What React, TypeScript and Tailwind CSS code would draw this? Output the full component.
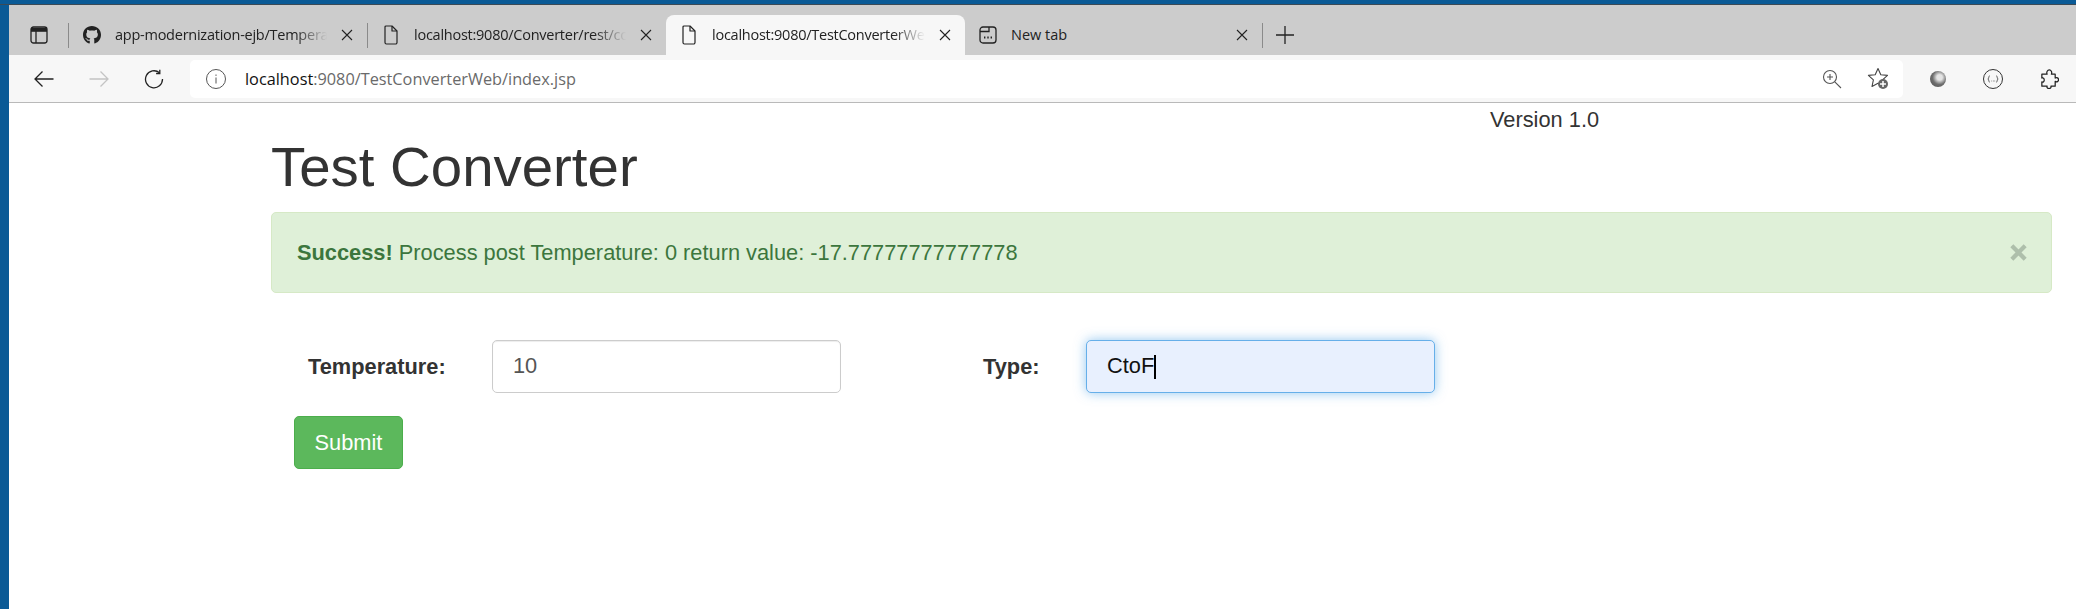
import React from "react";
import { FaGithub } from "react-icons/fa";

const Close = ({ className = "" }: { className?: string }) => (
  <svg viewBox="0 0 12 12" className={"w-3 h-3 shrink-0 " + className} fill="none" stroke="#222" strokeWidth="1.1">
    <path d="M1 1l10 10M11 1L1 11" />
  </svg>
);

const FileIcon = () => (
  <svg viewBox="0 0 16 20" className="w-4 h-5 shrink-0" fill="none" stroke="#222" strokeWidth="1.2" strokeLinejoin="round">
    <path d="M3 1h6l5 5v11.5a1.5 1.5 0 0 1-1.5 1.5h-9A1.5 1.5 0 0 1 2 17.500V2a1 1 0 0 1 1-1z" />
    <path d="M9 1v5h5" />
  </svg>
);

const Sep = () => <div className="w-px h-[25px] bg-[#8a8a8a] shrink-0" />;

function Tab({ icon, title, active, width, fade = true }: { icon: React.ReactNode; title: string; active?: boolean; width: string; fade?: boolean }) {
  return (
    <div className={(active ? "bg-[#f7f7f7] rounded-t-[8px] " : "") + width + " h-10 flex items-center pl-[14px] pr-[14px] gap-[14px] shrink-0"}>
      <div className="w-[18px] flex justify-center shrink-0">{icon}</div>
      <div className={"flex-1 min-w-0 whitespace-nowrap text-[14.5px] text-[#222] " + (fade ? "tracking-[-0.25px] [mask-image:linear-gradient(to_right,black_85%,transparent)]" : "")}>{title}</div>
      <Close />
    </div>
  );
}

export default function App() {
  return (
    <div className="w-[2076px] h-[609px] bg-[#0a5a96] overflow-hidden pt-[4px] font-['Liberation_Sans',sans-serif]">
      <div className="h-px bg-[#3c4a55]" />
      <div className="ml-[9px] h-[604px] bg-white flex flex-col">
        {/* tab strip */}
        <div className="h-[50px] bg-[#cccccc] flex items-end font-['Open_Sans',sans-serif] shrink-0">
          <div className="h-10 flex items-center shrink-0">
            <svg viewBox="0 0 18 18" className="w-[18px] h-[18px] ml-[21px] mr-[20px]" fill="none" stroke="#222" strokeWidth="1.3">
              <rect x="1" y="1" width="16" height="16" rx="2.500" />
              <path d="M1 3.800h16" strokeWidth="4" />
              <path d="M6 5v12" />
            </svg>
            <Sep />
          </div>
          <Tab width="w-[298px]" title="app-modernization-ejb/Tempera" icon={<FaGithub className="w-[20px] h-[20px] text-[#222]" />} />
          <div className="h-10 flex items-center shrink-0"><Sep /></div>
          <Tab width="w-[298px]" title="localhost:9080/Converter/rest/co" icon={<FileIcon />} />
          <Tab active width="w-[299px]" title="localhost:9080/TestConverterWeb" icon={<FileIcon />} />
          <Tab
            width="w-[297px]"
            fade={false}
            title="New tab"
            icon={
              <svg viewBox="0 0 18 18" className="w-[18px] h-[18px]" fill="none" stroke="#222" strokeWidth="1.3">
                <rect x="1" y="1" width="16" height="16" rx="3" />
                <path d="M1 5.500h9V1" />
                <path d="M5 11.500h1.400M8.300 11.500h1.400M11.600 11.500h1.400" strokeWidth="1.800" />
              </svg>
            }
          />
          <div className="h-10 flex items-center shrink-0">
            <Sep />
            <svg viewBox="0 0 20 20" className="w-5 h-5 ml-[12px]" fill="none" stroke="#222" strokeWidth="1.3">
              <path d="M10 1v18M1 10h18" />
            </svg>
          </div>
        </div>
        {/* toolbar */}
        <div className="h-[48px] bg-[#f7f7f7] border-b border-[#b9b9b9] flex items-start pt-[5px] shrink-0 font-['Open_Sans',sans-serif]">
          <div className="flex items-center h-[38px] pl-[25px] gap-[35px] w-[181px] shrink-0">
            <svg viewBox="0 0 20 20" className="w-5 h-5" fill="none" stroke="#222" strokeWidth="1.3">
              <path d="M19.500 10H1M8.500 2.500L1 10l7.500 7.500" />
            </svg>
            <svg viewBox="0 0 20 20" className="w-5 h-5" fill="none" stroke="#c4c4c4" strokeWidth="1.3">
              <path d="M0.500 10H19M11.500 2.500L19 10l-7.500 7.500" />
            </svg>
            <svg viewBox="0 0 20 20" className="w-5 h-5" fill="none" stroke="#222" strokeWidth="1.3">
              <path d="M15.500 3.800a8.500 8.500 0 1 0 3 6.200" />
              <path d="M15.800 0.800v3.700h-3.700" />
            </svg>
          </div>
          <div className="w-[1713px] h-[38px] bg-white rounded-[5px] flex items-center pl-[16px] shrink-0">
            <svg viewBox="0 0 20 20" className="w-5 h-5 mr-[19px]" fill="none" stroke="#555" strokeWidth="1">
              <circle cx="10" cy="10" r="9.500" />
              <path d="M10 8.500v6M10 5.500v1.400" />
            </svg>
            <div className="text-[16.300px] text-[#6a6a6a] whitespace-nowrap"><span className="text-[#111]">localhost</span>:9080/TestConverterWeb/index.jsp</div>
            <div className="ml-auto flex items-center mr-[12px]">
              <svg viewBox="0 0 20 20" className="w-5 h-5 mr-[25px]" fill="none" stroke="#555" strokeWidth="1.1">
                <circle cx="8" cy="8" r="6.500" />
                <path d="M12.800 12.800L19 19M8 5v6M5 8h6" />
              </svg>
              <div className="relative w-[24px] h-[24px]">
                <svg viewBox="0 0 22 22" className="w-[22px] h-[22px]" fill="none" stroke="#444" strokeWidth="1.1" strokeLinejoin="round">
                  <path d="M11 1.500l2.800 6.200 6.700.7-5 4.500 1.400 6.600L11 16.200 5 19.500l1.400-6.600-5-4.500 6.800-.7z" />
                </svg>
                <div className="absolute left-[11px] top-[12px] w-[10px] h-[10px] rounded-full bg-[#666] flex items-center justify-center">
                  <svg viewBox="0 0 8 8" className="w-2 h-2" stroke="white" strokeWidth="1.500"><path d="M4 1v6M1 4h6" /></svg>
                </div>
              </div>
            </div>
          </div>
          <div className="flex items-center h-[38px] flex-1 font-['Liberation_Sans',sans-serif]">
            <div className="w-[16px] h-[16px] ml-[27px] rounded-full bg-[radial-gradient(circle_at_60%_40%,#e4e4e4_20%,#6e6e6e_52%,#4e4e4e)]" />
            <svg viewBox="0 0 20 20" className="w-5 h-5 ml-[37px]" fill="none" stroke="#333" strokeWidth="1">
              <circle cx="10" cy="10" r="9.500" />
              <path d="M6.800 7c-1 0-1 .6-1 1.300 0 1-.3 1.400-1 1.700.7.300 1 .7 1 1.700 0 .7 0 1.300 1 1.300M13.200 7c1 0 1 .6 1 1.300 0 1 .3 1.400 1 1.700-.7.300-1 .7-1 1.700 0 .7 0 1.300-1 1.300M8.500 12h.6M10 12h.6M11.500 12h.6" strokeWidth="0.800" />
            </svg>
            <svg viewBox="0 0 21 21" className="w-5 h-5 ml-[36px]" fill="none" stroke="#222" strokeWidth="1.300" strokeLinejoin="round">
              <path d="M3 5.500H8.500C7.500 3 9 1 10.800 1S14 3 13 5.500H17V9.500C18.800 8.500 20.500 9.500 20.500 11.300S18.800 14 17 13V18H12.500C13 19.500 12 20.500 10.500 20.500S8 19.500 8.500 18H3V13.500C4.500 14.300 5.500 13 5.500 11.500S4.500 8.800 3 9.500Z" />
            </svg>
          </div>
        </div>
        {/* page */}
        <div className="flex-1 relative pl-[262px] pr-[16px] text-[#333]">
          <div className="absolute left-[1481px] top-[3px] text-[21.800px] leading-[28px] text-[#333]">Version 1.0</div>
          <h1 className="text-[56.400px] leading-[62px] pt-[33px] m-0 font-normal text-[#333]">Test Converter</h1>
          <div className="mt-[14px] h-[81px] w-[1781px] bg-[#dff0d8] border border-[#d6e9c6] rounded-[5px] flex items-center justify-between pl-[25px] pr-[25px] text-[21.800px] text-[#3c763d]">
            <div className="pt-[1px]"><strong className="font-bold">Success!</strong> Process post Temperature: 0 return value: -17.77777777777778</div>
            <svg viewBox="0 0 14 14" className="w-[17px] h-[17px] -mr-[1px]" stroke="#aebfab" strokeWidth="3.500" fill="none"><path d="M1.500 1.500l11 11M12.500 1.500l-11 11" /></svg>
          </div>
          <div className="mt-[47px] h-[53px] flex items-center text-[21.800px]">
            <label className="font-bold ml-[37px] w-[184px] shrink-0 pt-[1px]">Temperature:</label>
            <div className="w-[349px] h-[53px] border border-[#cccccc] rounded-[5px] bg-white px-[20px] flex items-center text-[#555] shrink-0 shadow-[inset_0_1px_1px_rgba(0,0,0,0.075)]">10</div>
            <label className="font-bold ml-[142px] w-[103px] shrink-0 pt-[1px]">Type:</label>
            <div className="w-[349px] h-[53px] border border-[#66afe9] rounded-[5px] bg-[#e8f0fe] px-[20px] flex items-center text-[#111] shrink-0 shadow-[0_0_12px_rgba(102,175,233,0.7)]">
              CtoF<span className="w-[2px] h-[24px] bg-black" />
            </div>
          </div>
          <button className="mt-[23px] ml-[23px] w-[109px] h-[53px] pt-[1px] bg-[#5cb85c] border border-[#4cae4c] rounded-[5px] text-white text-[21.800px] block">Submit</button>
        </div>
      </div>
    </div>
  );
}
